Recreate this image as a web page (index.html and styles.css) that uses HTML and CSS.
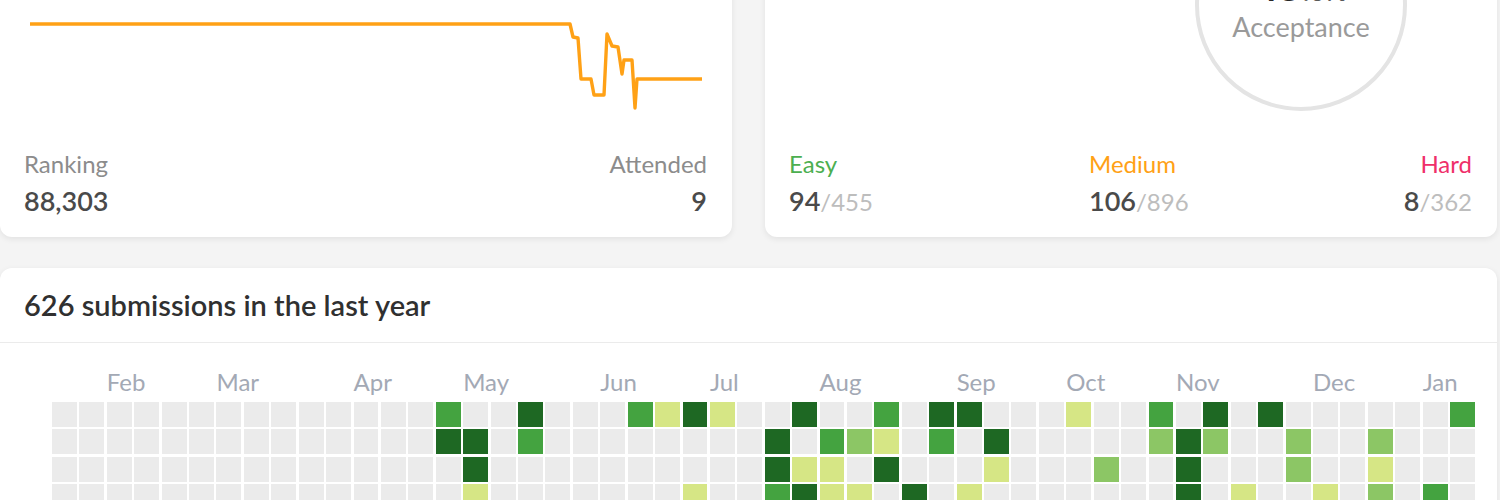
FILE: index.html
```html
<!DOCTYPE html>
<html lang="en">
<head>
<meta charset="utf-8">
<title>Profile</title>
<link rel="stylesheet" href="styles.css">
</head>
<body>
<div class="page">
  <div class="top-row">
    <section class="card contest">
      <svg class="chart" width="732" height="289" viewBox="0 -140 732 289">
        <polyline class="rating-line" points="30,24 570,24 573,37 578,38 581,79 591,79 594,95 604,95 607,34 612,46 618,47 622,74 624,60 632,60 635,108 637,79 702,79"/>
      </svg>
      <div class="stats">
        <div class="stat">
          <div class="label">Ranking</div>
          <div class="value">88,303</div>
        </div>
        <div class="stat right">
          <div class="label">Attended</div>
          <div class="value">9</div>
        </div>
      </div>
    </section>
    <section class="card solved">
      <div class="ring-area">
        <div class="ring">
          <div class="pct"><span class="big">45</span><span class="small">.0%</span></div>
          <div class="acc">Acceptance</div>
        </div>
      </div>
      <div class="diff">
        <div class="stat">
          <div class="label easy">Easy</div>
          <div class="value">94<span class="total">/455</span></div>
        </div>
        <div class="stat">
          <div class="label medium">Medium</div>
          <div class="value">106<span class="total">/896</span></div>
        </div>
        <div class="stat right">
          <div class="label hard">Hard</div>
          <div class="value">8<span class="total">/362</span></div>
        </div>
      </div>
    </section>
  </div>
  <section class="card activity">
    <header class="act-head">626 submissions in the last year</header>
    <div class="act-body">
      <div class="months">
        <span class="month" style="grid-column: 3 / span 4">Feb</span>
        <span class="month" style="grid-column: 7 / span 4">Mar</span>
        <span class="month" style="grid-column: 12 / span 4">Apr</span>
        <span class="month" style="grid-column: 16 / span 4">May</span>
        <span class="month" style="grid-column: 21 / span 4">Jun</span>
        <span class="month" style="grid-column: 25 / span 4">Jul</span>
        <span class="month" style="grid-column: 29 / span 4">Aug</span>
        <span class="month" style="grid-column: 34 / span 4">Sep</span>
        <span class="month" style="grid-column: 38 / span 4">Oct</span>
        <span class="month" style="grid-column: 42 / span 4">Nov</span>
        <span class="month" style="grid-column: 47 / span 4">Dec</span>
        <span class="month" style="grid-column: 51 / span 2">Jan</span>
      </div>
      <div class="heat-grid" id="heat"></div>
    </div>
  </section>
</div>
<script src="script.js"></script>
</body>
</html>
```

FILE: styles.css
```css
html, body {
  margin: 0;
  padding: 0;
  background: #f4f4f4;
  font-family: Lato, "Open Sans", sans-serif;
  overflow: hidden;
}

.page {
  margin-top: -140px;
  padding-right: 3px;
  display: flex;
  flex-direction: column;
  gap: 31px;
}

.top-row {
  display: grid;
  grid-template-columns: 732px 732px;
  column-gap: 33px;
}

.card {
  background: #fff;
  border-radius: 12px;
  box-shadow: 0 2px 6px rgba(0, 0, 0, 0.08);
}

.contest, .solved {
  height: 377px;
  display: flex;
  flex-direction: column;
}

.chart {
  display: block;
  flex: none;
}

.rating-line {
  fill: none;
  stroke: #ffa116;
  stroke-width: 3.4;
  stroke-linejoin: round;
}

.stats {
  display: flex;
  justify-content: space-between;
  padding: 0 25px 0 24px;
}

.stat .label {
  font-size: 24px;
  line-height: 30px;
  color: #8c8c8c;
  margin-bottom: 5px;
}

.stat .value {
  font-size: 27px;
  line-height: 34px;
  font-weight: 600;
  color: #4a4a4a;
}

.stat.right {
  text-align: right;
}

.ring-area {
  height: 289px;
  display: flex;
  justify-content: flex-end;
  padding-right: 90px;
  box-sizing: border-box;
  flex: none;
}

.ring {
  margin-top: 39px;
  width: 212px;
  height: 212px;
  border: 4px solid #e4e4e4;
  border-radius: 50%;
  box-sizing: border-box;
  display: flex;
  flex-direction: column;
  align-items: center;
  justify-content: center;
}

.pct {
  line-height: 40px;
  color: #262626;
  margin-top: -2px;
  margin-bottom: -4px;
}

.pct .big {
  font-size: 42px;
  font-weight: 700;
}

.pct .small {
  font-size: 28px;
  font-weight: 400;
  color: #595959;
}

.acc {
  font-size: 27px;
  line-height: 32px;
  color: #9a9a9a;
}

.diff {
  display: grid;
  grid-template-columns: 300px 1fr auto;
  padding: 0 25px 0 24px;
}

.label.easy { color: #4caf50; }
.label.medium { color: #ffa116; }
.label.hard { color: #ef2f6a; }

.value .total {
  font-size: 24px;
  font-weight: 400;
  color: #bdbdbd;
}

.activity {
  padding-bottom: 30px;
}

.act-head {
  height: 75px;
  box-sizing: border-box;
  padding: 19px 24px 0;
  font-size: 29px;
  line-height: 36px;
  font-weight: 600;
  color: #303030;
  border-bottom: 1px solid #ebebeb;
}

.act-body {
  padding: 26px 22px 0 52px;
}

.months,
.heat-grid {
  width: 1423px;
  display: grid;
  grid-template-columns: repeat(52, 1fr);
  column-gap: 2.5px;
}

.months {
  height: 26px;
  margin-bottom: 7px;
}

.month {
  font-size: 24px;
  line-height: 26px;
  color: #a3a9b5;
  white-space: nowrap;
}

.heat-grid {
  grid-template-rows: repeat(7, 24.9px);
  row-gap: 2.5px;
  grid-auto-flow: column;
}

.cell { background: #ebebeb; }
.cell.l1 { background: #d6e685; }
.cell.l2 { background: #8cc665; }
.cell.l3 { background: #44a340; }
.cell.l4 { background: #1e6823; }
```

FILE: script.js
```js
(function () {
  var rows = [
    {14:3,17:4,21:3,22:1,23:4,24:1,27:4,30:3,32:4,33:4,37:1,40:3,42:4,44:4,51:3},
    {14:4,15:4,17:3,26:4,28:3,29:2,30:1,32:3,34:4,40:2,41:4,42:2,45:2,48:2},
    {15:4,26:4,27:1,28:1,30:4,34:1,38:2,41:4,45:2,48:1},
    {15:1,23:1,26:3,27:4,28:1,29:1,31:4,33:1,41:4,43:1,46:1,48:2,50:3},
    {16:2,27:3,30:1,41:3,47:1},
    {22:1,29:4,35:2,44:1},
    {18:1,33:2,49:1}
  ];
  var grid = document.getElementById('heat');
  for (var c = 0; c < 52; c++) {
    for (var r = 0; r < 7; r++) {
      var d = document.createElement('div');
      var lvl = rows[r][c];
      d.className = 'cell' + (lvl ? ' l' + lvl : '');
      grid.appendChild(d);
    }
  }
})();
```
